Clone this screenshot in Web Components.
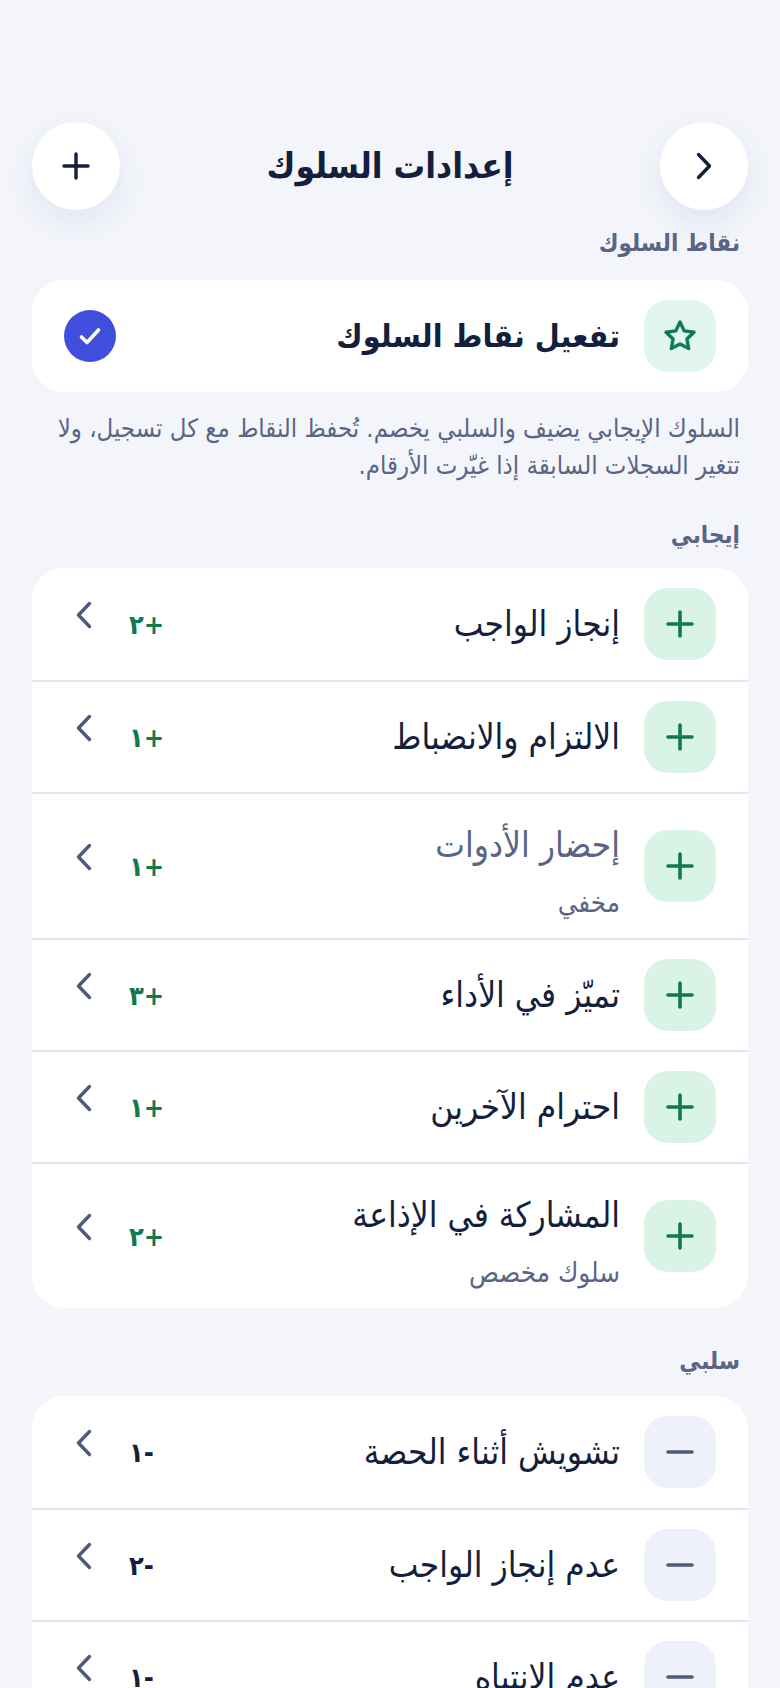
<!DOCTYPE html>
<html lang="ar" dir="rtl">
<head>
<meta charset="utf-8">
<title>إعدادات السلوك</title>
<style>
  html, body { margin: 0; padding: 0; background: #f3f5fb; }
  body { width: 780px; height: 1688px; overflow: hidden; font-family: "DejaVu Sans", sans-serif; font-stretch: condensed; }
</style>
</head>
<body>
<behavior-settings></behavior-settings>

<template id="row-tpl">
  <style>
    :host { display: flex; align-items: center; padding: 19px 32px; border-bottom: 2px solid #e2e6f3; color: #141f3d; }
    :host([first]) { padding-top: 20px; padding-bottom: 20px; }
    :host([last]) { border-bottom: 0; }
    :host([has-sub]) { height: 144px; padding-top: 0; padding-bottom: 0; }
    .icon { width: 72px; height: 72px; border-radius: 24px; flex: none; display: flex; align-items: center; justify-content: center; background: #d9f4e7; color: #0f7a4f; }
    :host([kind="neg"]) .icon { background: #eef1fa; color: #4e5a7c; }
    .text { flex: 1; margin-right: 24px; min-width: 0; }
    :host([has-sub]) .text { padding-top: 8px; }
    .name { font-size: 35px; line-height: 60px; }
    .sub { font-size: 27.5px; line-height: 46px; margin-top: 4px; color: #5a6585; }
    :host([muted]) .name { color: #5a6585; }
    .points { font-size: 27px; font-weight: 700; color: #0f7a4f; width: 60px; margin-left: 33px; text-align: left; direction: rtl; }
    :host([kind="neg"]) .points { color: #141f3d; }
    .chev { width: 24px; height: 32px; flex: none; margin-top: -18px; margin-left: 8px; color: #4e5a7c; }
  </style>
  <div class="icon"></div>
  <div class="text">
    <div class="name"><slot></slot></div>
    <div class="sub" hidden><slot name="sub"></slot></div>
  </div>
  <div class="points"></div>
  <svg class="chev" viewBox="0 0 24 32" fill="none" stroke="currentColor" stroke-width="3.4" stroke-linecap="round" stroke-linejoin="round"><path d="M17.5 4.5 6.5 16l11 11.5"/></svg>
</template>

<script>
const PLUS = '<svg width="32" height="32" viewBox="0 0 32 32" fill="none" stroke="currentColor" stroke-width="3.6" stroke-linecap="round"><path d="M16 4v24M4 16h24"/></svg>';
const MINUS = '<svg width="32" height="32" viewBox="0 0 32 32" fill="none" stroke="currentColor" stroke-width="3.6" stroke-linecap="round"><path d="M4 16h24"/></svg>';

class BehaviorRow extends HTMLElement {
  constructor() {
    super();
    this.attachShadow({ mode: 'open' });
    this.shadowRoot.appendChild(document.getElementById('row-tpl').content.cloneNode(true));
  }

  connectedCallback() {
    const root = this.shadowRoot;
    const hasSub = !!this.querySelector('[slot="sub"]');
    root.querySelector('.icon').innerHTML = this.getAttribute('kind') === 'neg' ? MINUS : PLUS;
    root.querySelector('.points').textContent = this.getAttribute('points');
    root.querySelector('.sub').hidden = !hasSub;
    this.toggleAttribute('has-sub', hasSub);
  }
}

class RoundButton extends HTMLElement {
  constructor() {
    super();
    this.attachShadow({ mode: 'open' });
    this.shadowRoot.innerHTML = `
      <style>
        :host { display: flex; width: 88px; height: 88px; border-radius: 50%; background: #fff; align-items: center; justify-content: center; box-shadow: 0 12px 32px rgba(40, 55, 110, 0.08); color: #141f3d; }
      </style>
      <slot></slot>
    `;
  }
}

class SectionLabel extends HTMLElement {
  constructor() {
    super();
    this.attachShadow({ mode: 'open' });
    this.shadowRoot.innerHTML = `
      <style>
        :host { display: block; padding: 0 8px; font-size: 24px; line-height: 38px; font-weight: 600; color: #5a6585; }
      </style>
      <slot></slot>
    `;
  }
}

class ListCard extends HTMLElement {
  constructor() {
    super();
    this.attachShadow({ mode: 'open' });
    this.shadowRoot.innerHTML = `
      <style>
        :host { display: block; background: #fff; border-radius: 32px; overflow: hidden; }
      </style>
      <slot></slot>
    `;
  }
}

class ToggleCard extends HTMLElement {
  constructor() {
    super();
    this.attachShadow({ mode: 'open' });
    this.shadowRoot.innerHTML = `
      <style>
        :host { display: flex; align-items: center; height: 112px; box-sizing: border-box; padding: 0 32px; background: #fff; border-radius: 32px; color: #141f3d; }
        .icon { width: 72px; height: 72px; border-radius: 24px; background: #e3f6ed; display: flex; align-items: center; justify-content: center; color: #0c7a5c; flex: none; }
        .label { flex: 1; margin-right: 24px; font-size: 32px; font-weight: 700; }
        .check { width: 52px; height: 52px; border-radius: 50%; background: #3f4fdc; display: flex; align-items: center; justify-content: center; flex: none; }
      </style>
      <div class="icon">
        <svg width="34" height="34" viewBox="0 0 34 34" fill="none" stroke="currentColor" stroke-width="3.4" stroke-linejoin="round"><path d="M17 3l4.3 8.9 9.7 1.3-7.1 6.7 1.8 9.6L17 25l-8.7 4.5 1.8-9.6L3 13.2l9.7-1.3z"/></svg>
      </div>
      <div class="label"><slot></slot></div>
      <div class="check">
        <svg width="26" height="26" viewBox="0 0 26 26" fill="none" stroke="#fff" stroke-width="3.6" stroke-linecap="round" stroke-linejoin="round"><path d="M4.5 14l5.5 5.5L21.5 7"/></svg>
      </div>
    `;
  }
}

class BehaviorSettings extends HTMLElement {
  constructor() {
    super();
    this.attachShadow({ mode: 'open' });
    const row = (name, points, kind, extra = '') => `<behavior-row kind="${kind}" points="${points}" ${extra}>${name}</behavior-row>`;
    this.shadowRoot.innerHTML = `
      <style>
        :host { display: block; padding: 122px 32px 0; }
        header { display: flex; align-items: center; justify-content: space-between; }
        h1 { margin: 0; font-size: 35px; font-weight: 700; color: #141f3d; }
        section-label.first { margin-top: 14px; }
        toggle-card { margin-top: 18px; }
        p { margin: 18px 8px 0; font-size: 25.5px; line-height: 37px; color: #5a6585; }
        section-label.pos { margin-top: 32px; }
        section-label.neg { margin-top: 34px; }
        list-card { margin-top: 14px; }
        list-card.neg { margin-top: 16px; }
      </style>
      <header>
        <round-button>
          <svg width="24" height="32" viewBox="0 0 24 32" fill="none" stroke="currentColor" stroke-width="3.4" stroke-linecap="round" stroke-linejoin="round"><path d="M6.5 4.5 17.5 16 6.5 27.5"/></svg>
        </round-button>
        <h1>إعدادات السلوك</h1>
        <round-button>
          <svg width="30" height="30" viewBox="0 0 30 30" fill="none" stroke="currentColor" stroke-width="3.4" stroke-linecap="round"><path d="M15 3v24M3 15h24"/></svg>
        </round-button>
      </header>
      <section-label class="first">نقاط السلوك</section-label>
      <toggle-card>تفعيل نقاط السلوك</toggle-card>
      <p>السلوك الإيجابي يضيف والسلبي يخصم. تُحفظ النقاط مع كل تسجيل، ولا تتغير السجلات السابقة إذا غيّرت الأرقام.</p>
      <section-label class="pos">إيجابي</section-label>
      <list-card>
        ${row('إنجاز الواجب', '+٢', 'pos', 'first')}
        ${row('الالتزام والانضباط', '+١', 'pos')}
        <behavior-row kind="pos" points="+١" muted>إحضار الأدوات<span slot="sub">مخفي</span></behavior-row>
        ${row('تميّز في الأداء', '+٣', 'pos')}
        ${row('احترام الآخرين', '+١', 'pos')}
        <behavior-row kind="pos" points="+٢" last>المشاركة في الإذاعة<span slot="sub">سلوك مخصص</span></behavior-row>
      </list-card>
      <section-label class="neg">سلبي</section-label>
      <list-card class="neg">
        ${row('تشويش أثناء الحصة', '-١', 'neg', 'first')}
        ${row('عدم إنجاز الواجب', '-٢', 'neg')}
        ${row('عدم الانتباه', '-١', 'neg')}
      </list-card>
    `;
  }
}

customElements.define('behavior-row', BehaviorRow);
customElements.define('round-button', RoundButton);
customElements.define('section-label', SectionLabel);
customElements.define('list-card', ListCard);
customElements.define('toggle-card', ToggleCard);
customElements.define('behavior-settings', BehaviorSettings);
</script>
</body>
</html>
